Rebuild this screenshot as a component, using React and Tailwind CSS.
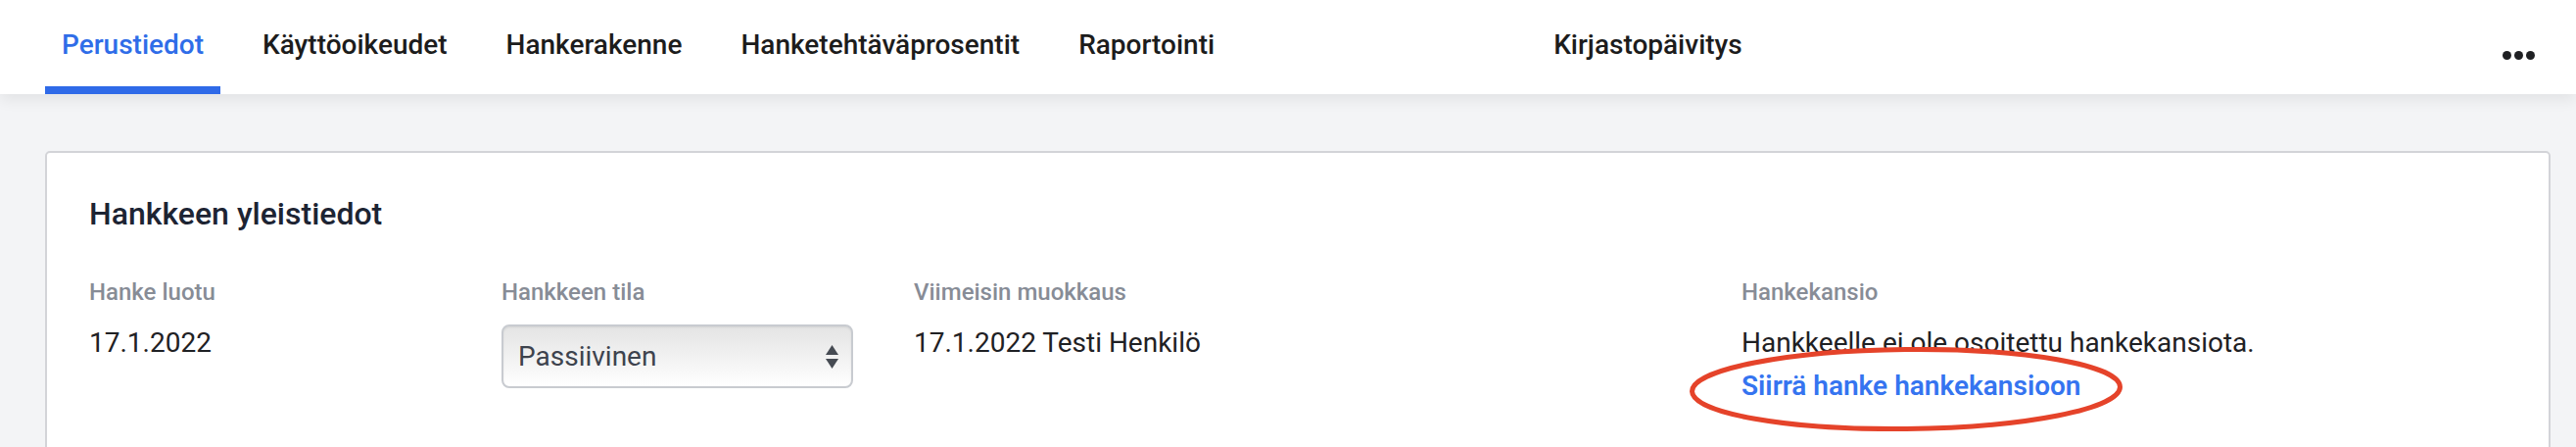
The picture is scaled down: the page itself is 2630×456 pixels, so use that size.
const TABS = [
  "Perustiedot",
  "Käyttöoikeudet",
  "Hankerakenne",
  "Hanketehtäväprosentit",
  "Raportointi",
];

const Field = ({ label, children }) => (
  <div>
    <div className="text-[24px] leading-[32px] font-medium text-[#878c96]">{label}</div>
    <div className="mt-[18px]">{children}</div>
  </div>
);

export default function App() {
  return (
    <div className="min-h-screen bg-[#f3f4f6] font-['Roboto',sans-serif] pb-[40px]">
      {/* Tabs */}
      <div className="relative z-10 bg-white h-[96px] flex pl-[46px] pr-[42px] shadow-[0_6px_14px_rgba(0,0,0,0.07)]">
        <div className="flex gap-[26px]">
          {TABS.map((t, i) => (
            <div
              key={t}
              className={`px-[17px] pt-[28px] border-b-[8px] text-[28px] leading-[36px] font-medium ${
                i === 0 ? "border-[#2f6ae8] text-[#2f6de8]" : "border-transparent text-[#1c1c1c]"
              }`}
            >
              {t}
            </div>
          ))}
          <div className="ml-[286px] px-[17px] pt-[28px] border-b-[8px] border-transparent text-[28px] leading-[36px] font-medium text-[#1c1c1c]">
            Kirjastopäivitys
          </div>
        </div>
        <div className="ml-auto mt-[52px] flex gap-[3px] self-start">
          <span className="w-[9px] h-[9px] rounded-full bg-[#1f2023]" />
          <span className="w-[9px] h-[9px] rounded-full bg-[#1f2023]" />
          <span className="w-[9px] h-[9px] rounded-full bg-[#1f2023]" />
        </div>
      </div>

      {/* Card */}
      <div className="mt-[58px] ml-[46px] mr-[26px] bg-white border-2 border-[#d3d4d8] rounded-[5px] px-[43px] pt-[42px] pb-[60px]">
        <h2 className="text-[32px] leading-[40px] font-medium text-[#1d2433]">Hankkeen yleistiedot</h2>

        <div className="mt-[44px] grid grid-cols-[421px_421px_845px_1fr]">
          <Field label="Hanke luotu">
            <div className="text-[28px] leading-[36px] text-[#1f2124]">17.1.2022</div>
          </Field>

          <Field label="Hankkeen tila">
            <div className="-mt-[1px] w-[359px] h-[65px] flex items-center justify-between pl-[15px] pr-[13px] border-2 border-[#c8cbd0] rounded-[8px] bg-gradient-to-b from-[#e4e4e4] via-[#f1f1f1] to-white shadow-[inset_0_1px_2px_rgba(0,0,0,0.08)]">
              <span className="text-[28px] leading-[36px] text-[#3d434d]">Passiivinen</span>
              <svg width="13" height="24" viewBox="0 0 13 24">
                <path d="M6.5 0 L13 10 H0 Z" fill="#464b53" />
                <path d="M6.5 24 L13 14 H0 Z" fill="#464b53" />
              </svg>
            </div>
          </Field>

          <Field label="Viimeisin muokkaus">
            <div className="text-[28px] leading-[36px] text-[#1f2124]">17.1.2022 Testi Henkilö</div>
          </Field>

          <Field label="Hankekansio">
            <div className="text-[28px] leading-[36px] text-[#1f2124]">Hankkeelle ei ole osoitettu hankekansiota.</div>
            <div className="mt-[8px]">
              <span className="relative inline-block text-[28px] leading-[36px] font-semibold text-[#3574f0]">
                Siirrä hanke hankekansioon
                <svg
                  className="absolute left-[-53px] top-[-22px] w-[442px] h-[86px] pointer-events-none"
                  viewBox="0 0 442 86"
                >
                  <ellipse
                    cx="221"
                    cy="43"
                    rx="218.5"
                    ry="40.5"
                    fill="none"
                    stroke="#e5432a"
                    strokeWidth="5"
                    transform="rotate(-0.6 221 43)"
                  />
                </svg>
              </span>
            </div>
          </Field>
        </div>
      </div>
    </div>
  );
}
